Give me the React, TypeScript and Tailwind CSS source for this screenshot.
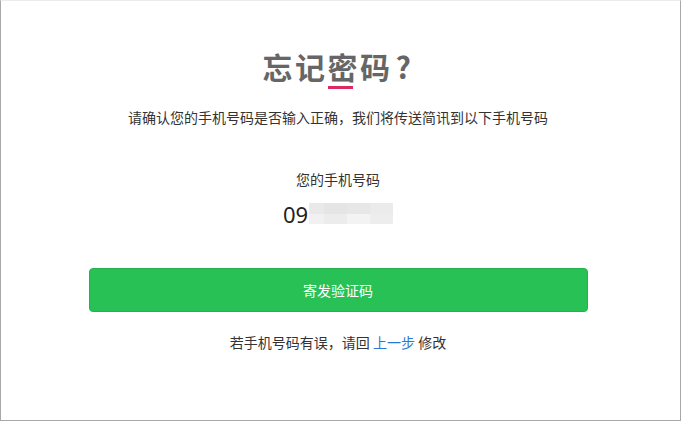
import React from "react";

const FONT = '"Noto Sans CJK SC", "Noto Sans", sans-serif';

// Light mosaic that stands in for the hidden part of the phone number
const MOSAIC: string[][] = [
  ["#e9e9e9", "#e5e5e5", "#e7e7e7", "#ebebeb"],
  ["#f1f1f1", "#ececec", "#f3f3f3", "#ededed"],
];
const MOSAIC_COLS = [15, 23, 23, 23];

function MaskedDigits() {
  return (
    <div className="flex flex-col h-[21px] mt-[3px] ml-[1px]">
      {MOSAIC.map((row, r) => (
        <div key={r} className="flex flex-1">
          {row.map((c, i) => (
            <div key={i} style={{ background: c, width: MOSAIC_COLS[i] }} />
          ))}
        </div>
      ))}
    </div>
  );
}

export default function App() {
  return (
    <div
      className="w-[681px] h-[421px] bg-white border-l border-r border-b border-t border-l-[#a8a8a8] border-r-[#a8a8a8] border-b-[#a8a8a8] border-t-[#ececec] overflow-hidden"
      style={{ fontFamily: FONT }}
    >
      <div className="flex flex-col items-center pr-[5px] pt-[45px]">
        <h1 className="text-[30px] leading-[40px] font-bold text-[#666666] tracking-[2.5px]">
          忘记
          <span className="relative inline-block">
            密
            <span className="absolute left-0 top-[40px] h-[3px] w-[25px] bg-[#dc2a62]" />
          </span>
          码<span className="ml-[3px]">?</span>
        </h1>

        <p className="mt-[21px] text-[14px] leading-[20px] text-[#333333]">
          请确认您的手机号码是否输入正确，我们将传送简讯到以下手机号码
        </p>

        <p className="mt-[42px] text-[14px] leading-[20px] text-[#333333]">您的手机号码</p>

        <div className="mt-[11px] flex items-start h-[28px]">
          <span className="text-[22px] leading-[28px] text-[#222222]" style={{ fontFamily: '"Noto Sans", sans-serif' }}>
            09
          </span>
          <MaskedDigits />
        </div>

        <button className="mt-[40px] w-[499px] h-[44px] rounded-[4px] bg-[#28c156] border border-[#22b34d] text-white text-[14px]">
          寄发验证码
        </button>

        <p className="mt-[20px] text-[14px] leading-[20px] text-[#333333]">
          若手机号码有误，请回 <span className="text-[#2b78d4]">上一步</span> 修改
        </p>
      </div>
    </div>
  );
}
